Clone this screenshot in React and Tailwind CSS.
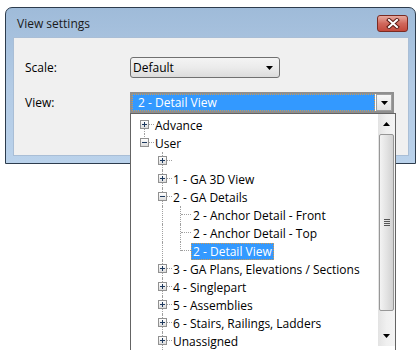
import React from "react";

const rows = [
  { level: 0, box: "plus", text: "Advance", lines: [[13, "bottom"]] },
  { level: 0, box: "minus", text: "User", lines: [[13, "top"]] },
  { level: 1, box: "plus", text: "", lines: [[31, "full"]] },
  { level: 1, box: "plus", text: "1 - GA 3D View", lines: [[31, "full"]] },
  { level: 1, box: "minus", text: "2 - GA Details", lines: [[31, "full"]] },
  { level: 2, text: "2 - Anchor Detail - Front", lines: [[31, "full"], [49, "full"]] },
  { level: 2, text: "2 - Anchor Detail - Top", lines: [[31, "full"], [49, "full"]] },
  { level: 2, text: "2 - Detail View", selected: true, lines: [[31, "full"], [49, "top"]] },
  { level: 1, box: "plus", text: "3 - GA Plans, Elevations / Sections", lines: [[31, "full"]] },
  { level: 1, box: "plus", text: "4 - Singlepart", lines: [[31, "full"]] },
  { level: 1, box: "plus", text: "5 - Assemblies", lines: [[31, "full"]] },
  { level: 1, box: "plus", text: "6 - Stairs, Railings, Ladders", lines: [[31, "full"]] },
  { level: 1, box: "plus", text: "Unassigned", lines: [[31, "full"]] },
];

function Arrow({ up }) {
  return (
    <svg width="7" height="4" viewBox="0 0 7 4">
      <polygon points={up ? "3.5,0 7,4 0,4" : "0,0 7,0 3.5,4"} fill="#000" />
    </svg>
  );
}

function ExpandBox({ type }) {
  return (
    <div className="absolute top-[4px] w-[9px] h-[9px] border border-[#919191] bg-gradient-to-b from-white to-[#dcdcdc] z-10 flex items-center justify-center">
      <svg width="7" height="7" viewBox="0 0 7 7">
        <rect x="1" y="3" width="5" height="1" fill="#1e3a5f" />
        {type === "plus" && <rect x="3" y="1" width="1" height="5" fill="#1e3a5f" />}
      </svg>
    </div>
  );
}

function TreeRow({ row }) {
  const center = 13 + row.level * 18;
  const textLeft = 24 + row.level * 18 + (row.level === 2 ? 2 : 0);
  return (
    <div className="relative h-[18px] flex items-center">
      {row.lines.map(([x, part], i) => (
        <div
          key={i}
          className={
            "absolute w-0 border-l border-dotted border-[#a0a0a0] " +
            (part === "full" ? "top-0 h-[18px]" : part === "top" ? "top-0 h-[9px]" : "top-[9px] h-[9px]")
          }
          style={{ left: x }}
        />
      ))}
      <div
        className="absolute top-[8px] h-0 border-t border-dotted border-[#a0a0a0]"
        style={{ left: center + 1, width: textLeft - center - (row.level === 2 ? 3 : 2) }}
      />
      {row.box && (
        <div className="absolute top-0" style={{ left: center - 4 }}>
          <ExpandBox type={row.box} />
        </div>
      )}
      <div className="absolute top-0 h-[18px] flex items-center" style={{ left: textLeft - 2 }}>
        <span
          className={
            "px-[1px] h-[17px] leading-[16px] whitespace-nowrap border " +
            (row.selected ? "bg-[#3399ff] text-white border-dotted border-[#d49a4e]" : "text-black border-transparent")
          }
        >
          {row.text}
        </span>
      </div>
    </div>
  );
}

function Scrollbar() {
  return (
    <div className="w-[17px] h-full flex flex-col bg-gradient-to-r from-[#e3e3e3] via-[#f0f0f0] to-[#f4f4f4]">
      <div className="h-[20px] flex items-center justify-center">
        <Arrow up />
      </div>
      <div className="h-[177px] mx-[1px] rounded-[2px] border border-[#979797] bg-gradient-to-r from-[#f3f3f3] via-[#e3e3e3] to-[#d2d2d2] flex items-center justify-center">
        <div className="flex flex-col gap-[1px]">
          <div className="w-[6px] h-[1px] bg-[#555]" />
          <div className="w-[6px] h-[1px] bg-[#555]" />
          <div className="w-[6px] h-[1px] bg-[#555]" />
          <div className="w-[6px] h-[1px] bg-[#555]" />
        </div>
      </div>
      <div className="h-[16px]" />
      <div className="h-[17px] flex items-center justify-center">
        <Arrow />
      </div>
    </div>
  );
}

export default function App() {
  return (
    <div className="relative w-[420px] h-[350px] bg-white overflow-hidden font-['Open_Sans',sans-serif] text-[12px] text-black">
      {/* Window */}
      <div className="ml-[5px] mt-[7px] w-[411px] h-[157px] rounded-t-[7px] border border-[#2d3c4d] bg-gradient-to-b from-[#9fbbd9] via-[#b3cbe5] to-[#bad2eb] flex flex-col px-[6px] pl-[7px] pb-[7px]">
        <div className="h-[29px] flex items-center justify-between">
          <span className="pl-[4px] pt-[2px] text-[#1a1a1a]">View settings</span>
          <div className="mt-[2px] mr-[1px] w-[31px] h-[17px] rounded-[3px] border border-[#7a2a22] bg-gradient-to-b from-[#e6a99f] via-[#d0685c] to-[#c3493c] flex items-center justify-center">
            <svg width="14" height="11" viewBox="0 0 14 11">
              <path d="M3 2 L11 9 M11 2 L3 9" stroke="#5a1a14" strokeWidth="4" strokeLinecap="square" />
              <path d="M3 2 L11 9 M11 2 L3 9" stroke="#ffffff" strokeWidth="2" strokeLinecap="square" />
            </svg>
          </div>
        </div>
        <div className="flex-1 bg-[#f0f0f0] border border-[#a9bed6] flex flex-col pt-[19px] gap-[14px]">
          <div className="flex items-center h-[21px]">
            <span className="w-[116px] pl-[11px]">Scale:</span>
            <div className="w-[150px] h-[21px] rounded-[3px] border border-[#707070] bg-gradient-to-b from-[#f4f4f4] via-[#ebebeb] to-[#dcdcdc] flex items-center justify-between pl-[2px] pr-[6px]">
              <span>Default</span>
              <Arrow />
            </div>
          </div>
          <div className="flex items-center h-[21px]">
            <span className="w-[116px] pl-[11px]">View:</span>
            <div className="w-[264px] h-[21px] border-2 border-[#8f8f8f] bg-white flex">
              <div className="flex-1 bg-[#3399ff] border border-dotted border-[#d49a4e] text-white flex items-center pl-[5px]">
                2 - Detail View
              </div>
              <div className="w-[16px] ml-[1px] border border-[#a0a0a0] bg-gradient-to-b from-[#f8f8f8] to-[#e2e2e2] flex items-center justify-center">
                <Arrow />
              </div>
            </div>
          </div>
        </div>
      </div>

      {/* Dropdown tree */}
      <div className="absolute left-[130px] top-[113px] w-[266px] h-[250px] border border-[#646464] bg-white flex">
        <div className="flex-1 pt-[2px]">
          {rows.map((row, i) => (
            <TreeRow key={i} row={row} />
          ))}
        </div>
        <div className="h-[232px]">
          <Scrollbar />
        </div>
      </div>
    </div>
  );
}
